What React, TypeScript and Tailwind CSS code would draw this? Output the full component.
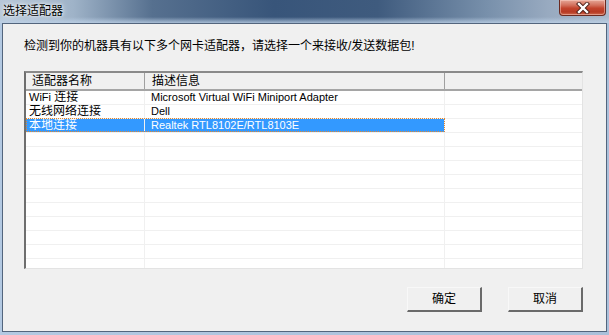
const font = { fontFamily: '"Liberation Sans", "Noto Sans CJK SC", sans-serif' };

interface Adapter {
  name: React.ReactNode;
  desc: string;
}

const adapters: Adapter[] = [
  {
    name: (
      <>
        <span className="text-[11px]">WiFi</span> 连接
      </>
    ),
    desc: 'Microsoft Virtual WiFi Miniport Adapter',
  },
  { name: '无线网络连接', desc: 'Dell' },
  { name: '本地连接', desc: 'Realtek RTL8102E/RTL8103E' },
];

const CloseButton = () => (
  <div className="absolute right-[3px] top-0 flex h-[16px] w-[47px] items-center justify-center rounded-b-[4px] border border-t-0 border-[#6b2a20] bg-[linear-gradient(180deg,#e6a797_0%,#d2705c_35%,#c2432c_55%,#b63a24_80%,#cf6a4e_100%)] shadow-[inset_0_0_0_1px_rgba(255,220,210,0.45)]">
    <svg width="14" height="12" viewBox="0 0 14 12">
      <path d="M3 2 L11 10 M11 2 L3 10" stroke="#4a1d16" strokeWidth="4.2" strokeLinecap="square" />
      <path d="M3 2 L11 10 M11 2 L3 10" stroke="#ffffff" strokeWidth="2.4" strokeLinecap="square" />
    </svg>
  </div>
);

const Row = ({ adapter, selected }: { adapter?: Adapter; selected?: boolean }) => {
  return (
    <div className="relative flex h-[14px] shrink-0 border-b border-[#f0f0f0] text-[12px] leading-[13px]">
      <div
        className={`w-[119px] shrink-0 truncate border-r border-[#f0f0f0] pl-[3px] ${
          selected ? 'bg-[#3399ff] text-white' : 'text-black'
        }`}
      >
        {adapter?.name}
      </div>
      <div
        className={`w-[300px] shrink-0 truncate border-r border-[#f0f0f0] pl-[6px] text-[11px] ${
          selected ? 'bg-[#3399ff] text-white' : 'text-black'
        }`}
      >
        {adapter?.desc}
      </div>
      <div className="flex-1"></div>
      {selected && (
        <div className="pointer-events-none absolute left-0 top-[-1px] h-[14px] w-[419px] border border-dotted border-[#e0872f]"></div>
      )}
    </div>
  );
};

const App = () => {
  return (
    <div
      className="flex h-[335px] w-[609px] flex-col overflow-hidden bg-[linear-gradient(90deg,#b3c9e2_0%,#aac0da_100%)]"
      style={font}
    >
      <div className="relative h-[23px] shrink-0 bg-[linear-gradient(90deg,#b7c7d8_0%,#9fb3c8_12%,#56708f_25%,#38557a_45%,#3f5b7e_62%,#7890ab_80%,#98aac0_90%,#a9b9cb_100%)]">
        <div className="absolute inset-x-0 bottom-0 h-[6px] bg-[linear-gradient(180deg,rgba(190,210,230,0)_0%,rgba(190,210,232,0.8)_100%)]"></div>
        <div className="relative pl-[3px] pt-[3px] text-[12px] leading-[16px] text-black [text-shadow:0_0_6px_#ffffff,0_0_3px_#ffffff]">
          选择适配器
        </div>
        <CloseButton />
      </div>

      <div className="mx-[2px] mb-[3px] flex flex-1 flex-col border border-[#53657d] bg-[#f0f0f0]">
        <div className="pl-[21px] pt-[14px] text-[12px] leading-[16px] text-black">
          检测到你的机器具有以下多个网卡适配器，请选择一个来接收/发送数据包!
        </div>

        <div className="ml-[21px] mt-[17px] flex h-[198px] w-[559px] flex-col overflow-hidden border-l-2 border-t-2 border-b border-r border-l-[#6e6e6e] border-t-[#8a8a8a] border-b-[#e3e3e3] border-r-[#e3e3e3] bg-white">
          <div className="flex h-[18px] shrink-0 border-b-2 border-[#a5a5a5] bg-[#f0f0f0] text-[12px] leading-[16px] text-black">
            <div className="w-[119px] shrink-0 border-r border-[#a0a0a0] pl-[6px]">适配器名称</div>
            <div className="w-[300px] shrink-0 border-r border-[#a0a0a0] pl-[7px]">描述信息</div>
            <div className="flex-1"></div>
          </div>
          {Array.from({ length: 13 }).map((_, i) => (
            <Row key={i} adapter={adapters[i]} selected={i === 2} />
          ))}
        </div>

        <div className="mt-[18px] flex justify-end gap-[26px] pr-[23px]">
          <button className="h-[25px] w-[75px] border border-b-2 border-r-2 border-l-[#f8f8f8] border-t-[#f8f8f8] border-b-[#6a6a6a] border-r-[#6a6a6a] bg-[#f0f0f0] text-[12px] text-black">
            确定
          </button>
          <button className="h-[25px] w-[75px] border border-b-2 border-r-2 border-l-[#f8f8f8] border-t-[#f8f8f8] border-b-[#6a6a6a] border-r-[#6a6a6a] bg-[#f0f0f0] text-[12px] text-black">
            取消
          </button>
        </div>
      </div>
    </div>
  );
};

export default App;
